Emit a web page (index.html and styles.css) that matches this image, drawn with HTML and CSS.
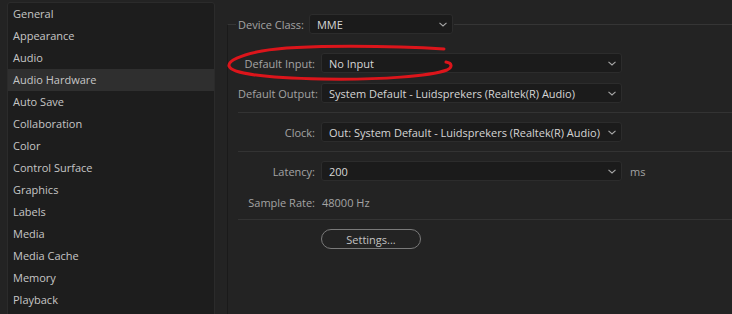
FILE: index.html
```html
<!DOCTYPE html>
<html lang="en">
<head>
  <meta charset="UTF-8">
  <title>Preferences - Audio Hardware</title>
  <link rel="stylesheet" href="styles.css">
</head>
<body>
  <div id="window">
    <ul class="sidebar">
      <li class="navItem">General</li>
      <li class="navItem">Appearance</li>
      <li class="navItem">Audio</li>
      <li class="navItem active">Audio Hardware</li>
      <li class="navItem">Auto Save</li>
      <li class="navItem">Collaboration</li>
      <li class="navItem">Color</li>
      <li class="navItem">Control Surface</li>
      <li class="navItem">Graphics</li>
      <li class="navItem">Labels</li>
      <li class="navItem">Media</li>
      <li class="navItem">Media Cache</li>
      <li class="navItem">Memory</li>
      <li class="navItem">Playback</li>
    </ul>

    <fieldset class="group">
      <legend class="groupHead">
        <span class="label">Device Class:</span>
        <div class="dropdown small">
          <span>MME</span>
          <svg class="chevron" viewBox="0 0 8 5"><path d="M0.5 0.8 L4 4 L7.5 0.8"/></svg>
        </div>
      </legend>

      <div class="row first">
        <span class="label">Default Input:</span>
        <div class="dropdown">
          <span>No Input</span>
          <svg class="chevron" viewBox="0 0 8 5"><path d="M0.5 0.8 L4 4 L7.5 0.8"/></svg>
        </div>
      </div>
      <div class="row">
        <span class="label">Default Output:</span>
        <div class="dropdown">
          <span>System Default - Luidsprekers (Realtek(R) Audio)</span>
          <svg class="chevron" viewBox="0 0 8 5"><path d="M0.5 0.8 L4 4 L7.5 0.8"/></svg>
        </div>
      </div>

      <div class="divider"></div>

      <div class="row">
        <span class="label">Clock:</span>
        <div class="dropdown">
          <span>Out: System Default - Luidsprekers (Realtek(R) Audio)</span>
          <svg class="chevron" viewBox="0 0 8 5"><path d="M0.5 0.8 L4 4 L7.5 0.8"/></svg>
        </div>
      </div>

      <div class="divider"></div>

      <div class="row">
        <span class="label">Latency:</span>
        <div class="dropdown">
          <span>200</span>
          <svg class="chevron" viewBox="0 0 8 5"><path d="M0.5 0.8 L4 4 L7.5 0.8"/></svg>
        </div>
        <span class="unit">ms</span>
      </div>
      <div class="row rate">
        <span class="label">Sample Rate:</span>
        <span class="value">48000 Hz</span>
      </div>

      <div class="divider"></div>

      <div class="row">
        <span class="label"></span>
        <button class="button">Settings...</button>
      </div>
    </fieldset>
  </div>

  <!-- red marker scribbled over the screenshot -->
  <svg class="scribble" viewBox="0 0 732 314">
    <path d="M444 49 C400 46 300 44 262 51 C240 55 228 61 229 66 C231 73 262 78 322 79 C382 80 430 76 447 70 C453 67 452 63 446 62"/>
  </svg>
</body>
</html>
```

FILE: styles.css
```css
html, body {
  margin: 0;
  padding: 0;
  height: 100%;
}
body {
  background-color: #232323;
  color: #d2d2d2;
  font-family: 'Open Sans', 'Noto Sans', sans-serif;
  font-size: 11px;
  overflow: hidden;
  position: relative;
}
#window {
  display: flex;
  align-items: flex-start;
  height: 100%;
}
.sidebar {
  list-style: none;
  margin: 2px 0 0 7px;
  padding: 0;
  width: 206px;
  height: 330px;
  background-color: #1d1d1d;
  border: 1px solid #2b2b2b;
  border-radius: 3px;
  flex-shrink: 0;
}
.navItem {
  height: 22px;
  line-height: 22px;
  padding-left: 5px;
  color: #c6c6c6;
}
.navItem.active {
  background-color: #2f2f2f;
}
.group {
  margin: 14px 0 0 12px;
  padding: 0 0 0 10px;
  border: none;
  border-top: 1px solid #353535;
  border-left: 1px solid #1a1a1a;
  flex: 1;
  min-height: 320px;
}
.groupHead {
  display: flex;
  align-items: center;
  gap: 5px;
  padding: 0 1px 0 2px;
  margin: 0 0 0 -2px;
}
.label {
  color: #a4a4a4;
  white-space: nowrap;
}
.row .label {
  width: 77px;
  text-align: right;
  flex-shrink: 0;
}
.row {
  display: flex;
  align-items: center;
  gap: 6px;
  min-height: 20px;
  margin-bottom: 10px;
}
.row.first {
  margin-top: 19px;
}
.row.rate {
  margin-top: 11px;
  margin-bottom: 8px;
}
.dropdown {
  display: flex;
  align-items: center;
  justify-content: space-between;
  box-sizing: border-box;
  width: 301px;
  height: 20px;
  padding: 0 5px 0 7px;
  background-color: #1b1b1b;
  border: 1px solid #2c2c2c;
  border-radius: 3px;
  color: #d6d6d6;
  white-space: nowrap;
}
.dropdown.small {
  width: 144px;
}
.chevron {
  width: 8px;
  height: 5px;
  fill: none;
  stroke: #a8a8a8;
  stroke-width: 1.1;
}
.unit {
  margin-left: 2px;
  color: #a4a4a4;
}
.value {
  color: #a4a4a4;
  padding-left: 1px;
}
.divider {
  height: 1px;
  background-color: #333333;
  margin: -1px 0 9px 0;
}
.button {
  box-sizing: border-box;
  width: 100px;
  height: 20px;
  padding: 0;
  background-color: transparent;
  border: 1px solid #7a7a7a;
  border-radius: 10px;
  color: #c2c2c2;
  font-family: 'Open Sans', 'Noto Sans', sans-serif;
  font-size: 11px;
}
.scribble {
  position: absolute;
  left: 0;
  top: 0;
  width: 732px;
  height: 314px;
  pointer-events: none;
  fill: none;
  stroke: #dc151b;
  stroke-width: 3;
  stroke-linecap: round;
}
```
